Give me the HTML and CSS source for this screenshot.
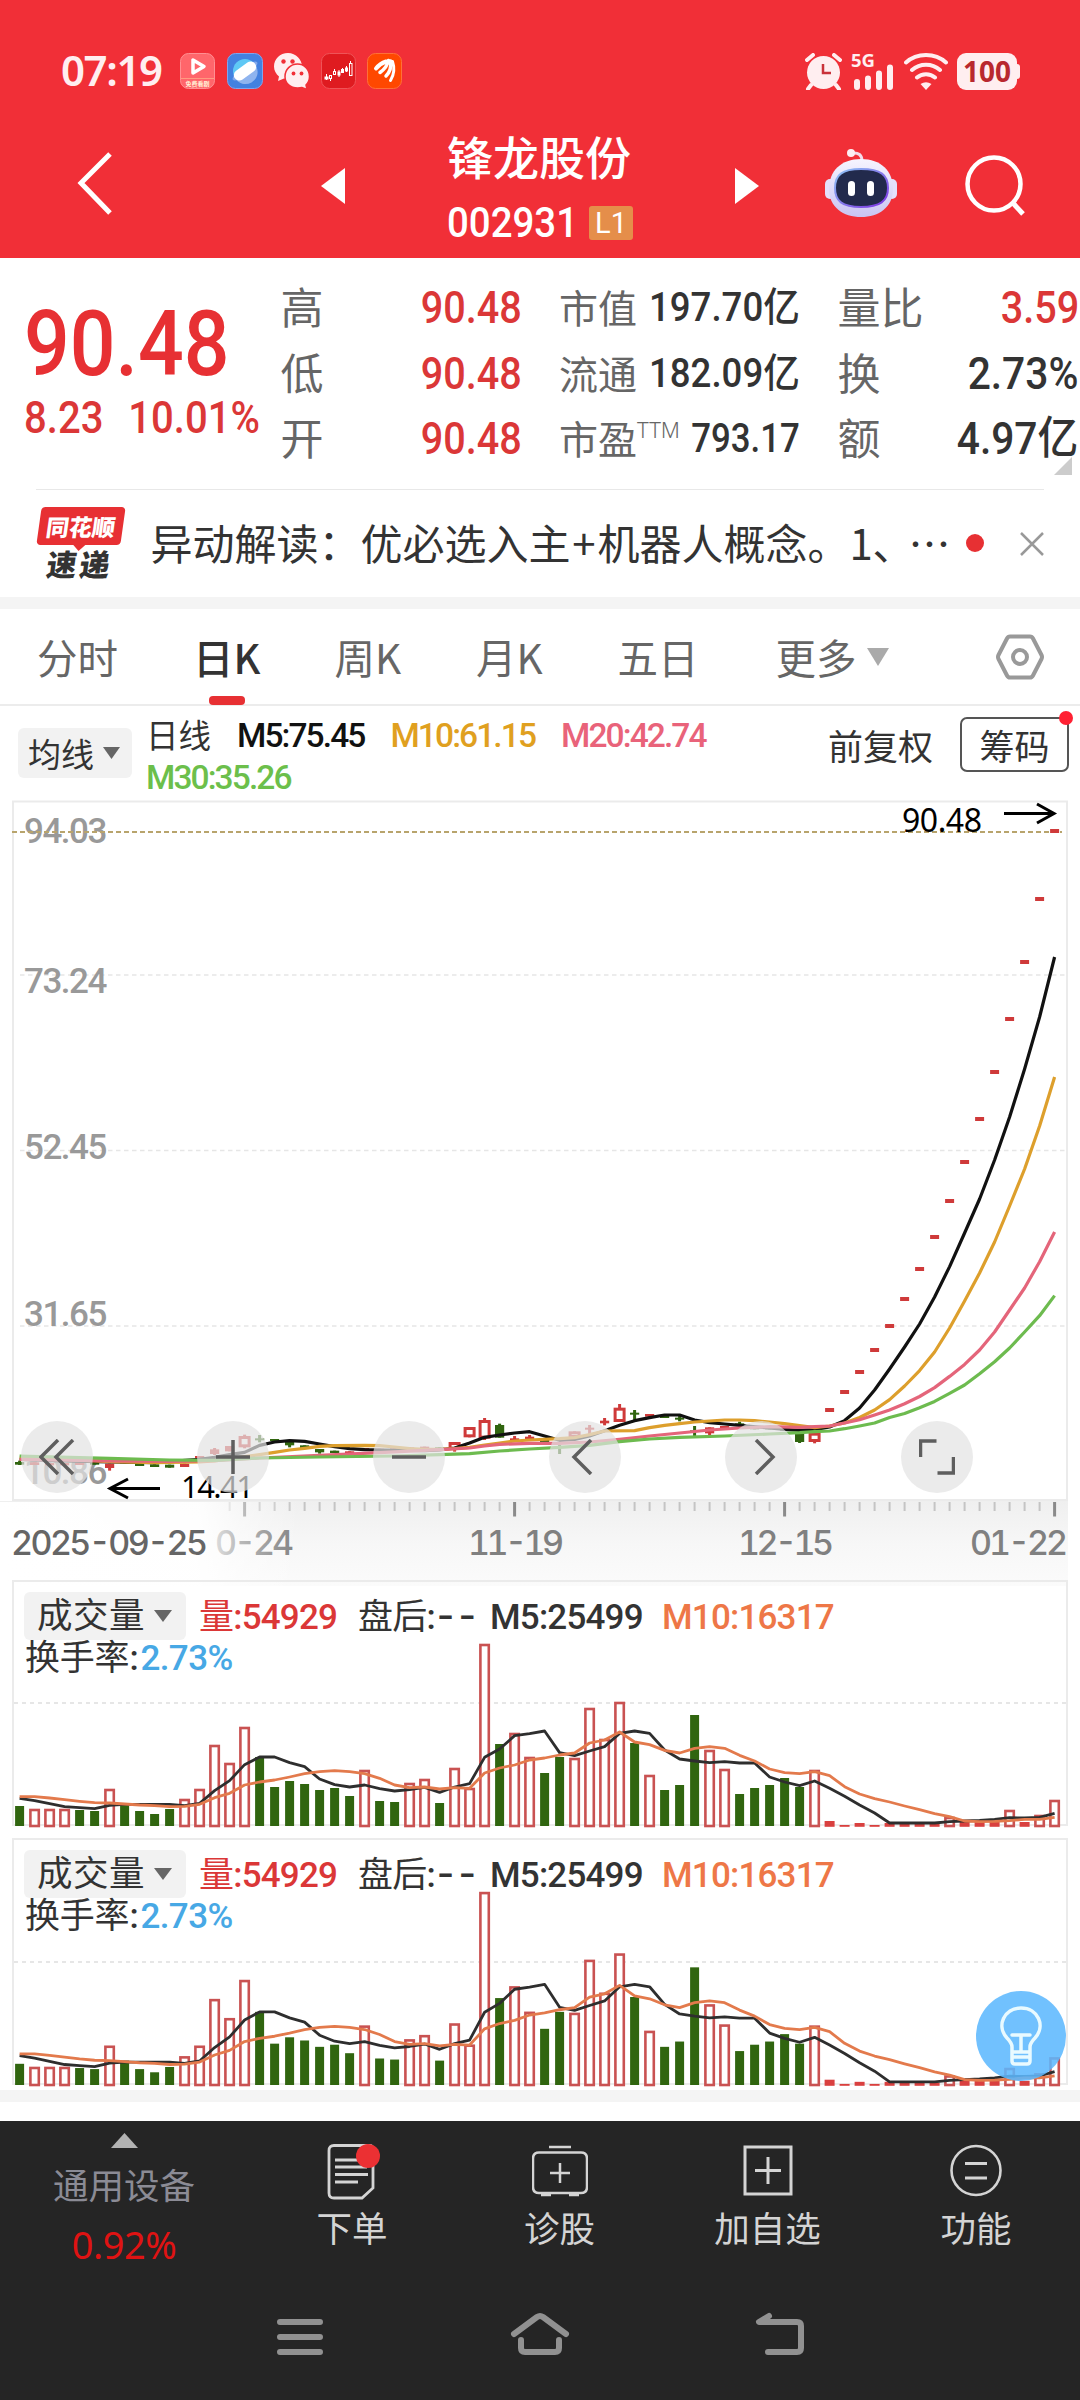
FILE: index.html
```html
<!DOCTYPE html>
<html lang="zh-CN">
<head>
    <meta charset="UTF-8">
    <title>锋龙股份 002931</title>
    <link rel="stylesheet" href="styles.css">
</head>
<body>
    <header class="header">
        <div class="status">
            <span class="time">07:19</span>
            <div class="apps">
                <svg width="35" height="36" viewBox="0 0 35 36">
                    <rect x=".5" y=".5" width="34" height="35" rx="8" fill="#ff666b" stroke="#ff8f92"/>
                    <rect x="1" y="25" width="33" height="1" fill="#ff9a80"/>
                    <path d="M13 7v13l11-6.500z" fill="none" stroke="#fff" stroke-width="3.500" stroke-linejoin="round"/>
                    <text x="17.500" y="33" font-size="6" font-weight="700" fill="#fff3d8" text-anchor="middle">免费看剧</text>
                </svg>
                <svg width="36" height="36" viewBox="0 0 36 36">
                    <rect x=".5" y=".5" width="35" height="35" rx="8" fill="#4381e0" stroke="#7fa5ee"/>
                    <circle cx="18" cy="18" r="12" fill="#5fc8f5"/>
                    <path d="M29 13a12 12 0 0 1-21 12z" fill="#8fb4ef"/>
                    <ellipse cx="18" cy="18" rx="15" ry="4.500" fill="#82a9ec" transform="rotate(-36 18 18)"/>
                    <rect x="5.500" y="12.500" width="25" height="11" rx="5.500" fill="#fff" transform="rotate(-36 18 18)"/>
                </svg>
                <svg width="35" height="36" viewBox="0 0 35 36">
                    <path d="M14 0C6 0 0 6 0 13.500c0 4 2 7.500 5 10L4 28l6-2.500c1.500.5 3 .5 4 .5 8 0 14-5.500 14-12.500S22 0 14 0z" fill="#ffeef0"/>
                    <path d="M23.500 11C16.500 11 11 16.500 11 23.500S16.500 35 23.500 35c1.500 0 3 0 4.500-.5l5 2-1-4.500c2-2 3.500-5 3.500-8.500C35.500 16.500 30.500 11 23.500 11z" fill="#ffeef0" stroke="#f12f37" stroke-width="1.500"/>
                    <g fill="#f12f37"><circle cx="9.500" cy="8.500" r="2.200"/><circle cx="18.500" cy="8.500" r="2.200"/><circle cx="19.500" cy="20.500" r="1.900"/><circle cx="27.500" cy="20.500" r="1.900"/></g>
                </svg>
                <svg width="35" height="36" viewBox="0 0 35 36">
                    <rect x=".5" y=".5" width="34" height="35" rx="8" fill="#df1b20" stroke="#ef5458"/>
                    <g fill="#fff"><path d="M3.500 23.500h4v3h-4zM5 21h1v6H5zM16.500 18.500h3v4h-3zM24 14.500h3v4h-3zM17.500 17h1v7h-1zM25 13h1v6h-1z"/></g>
                    <g fill="none" stroke="#fff"><rect x="8.500" y="22.500" width="2" height="3"/><rect x="12.500" y="18.500" width="2" height="3"/><rect x="20.500" y="16.500" width="2" height="3"/><rect x="28.500" y="10.500" width="2.500" height="12"/><path d="M9.500 25v3M13.500 16v3M21.500 15v5M29.500 8v2"/></g>
                </svg>
                <svg width="35" height="36" viewBox="0 0 35 36">
                    <rect x=".5" y=".5" width="34" height="35" rx="8" fill="#ff4800" stroke="#ff7038"/>
                    <g fill="none" stroke="#fff" stroke-linecap="round"><path d="M9 15.500q4-5 10-7" stroke-width="4"/><path d="M13 19.500q7-5 8.500-12" stroke-width="3.500"/><path d="M19 23q6-6 4.500-15" stroke-width="3.500"/><path d="M23.500 27.500q5.500-9 2-19" stroke-width="3"/></g>
                </svg>
            </div>
            <div class="signals">
                <svg width="37" height="37" viewBox="0 0 37 37">
                    <circle cx="18.500" cy="19.500" r="16.500" fill="#ffeef0"/>
                    <path d="M2 7l6-5M29 2l6 5M6 32l-3 4M31 32l3 4" stroke="#ffeef0" stroke-width="4" stroke-linecap="round"/>
                    <path d="M18 11v9h8" fill="none" stroke="#c9323a" stroke-width="2.500"/>
                </svg>
                <svg class="cell" width="44" height="37" viewBox="0 0 44 37">
                    <text x="0" y="14" font-size="18" font-weight="700" fill="#ffeef0" textLength="24" lengthAdjust="spacingAndGlyphs">5G</text>
                    <path d="M6 29v5M17 25.500V34M28 20.500V34M39 14.500V34" stroke="#ffeef0" stroke-width="6" stroke-linecap="round"/>
                </svg>
                <svg width="44" height="37" viewBox="0 0 44 37">
                    <g fill="none" stroke="#ffeef0" stroke-width="4" stroke-linecap="round"><path d="M2 9.500c11-10 29-10 40 0M8 17c8-7 20-7 28 0M13 24.500c5-4.500 13-4.500 18 0"/></g>
                    <path d="M16.500 31q5.500-3.500 11 0L22 37z" fill="#ffeef0"/>
                </svg>
                <span class="battery">100</span>
            </div>
        </div>
        <div class="titlebar">
            <svg class="back" width="38" height="66" viewBox="0 0 38 66"><path d="M34 3L5 32l29 30" fill="none" stroke="#fff" stroke-width="5"/></svg>
            <svg class="prev" width="24" height="36"><path d="M24 0v36L0 18z" fill="#fff"/></svg>
            <div class="stock">
                <h1>锋龙股份</h1>
                <p><span class="code">002931</span><span class="badge">L1</span></p>
            </div>
            <svg class="next" width="24" height="36"><path d="M0 0v36l24-18z" fill="#fff"/></svg>
            <svg class="robot" width="72" height="68" viewBox="0 0 72 68">
                <defs>
                    <linearGradient id="shell" x1="0" y1="0" x2="0" y2="1"><stop offset="0" stop-color="#f6f4ff"/><stop offset="1" stop-color="#c9c4f2"/></linearGradient>
                    <linearGradient id="rim" x1="0" y1="0" x2="1" y2="1"><stop offset="0" stop-color="#8fc7f5"/><stop offset="1" stop-color="#7a2fe0"/></linearGradient>
                </defs>
                <path d="M27 4q10-1 10 8" fill="none" stroke="#f3dcea" stroke-width="3"/>
                <circle cx="26" cy="4" r="4" fill="#fdeef3"/>
                <rect x="0" y="30" width="10" height="20" rx="5" fill="#e4e0fb"/>
                <rect x="62" y="30" width="10" height="20" rx="5" fill="#e4e0fb"/>
                <path d="M36 10c20 0 32 12 32 30S54 68 36 68 4 58 4 40s12-30 32-30z" fill="url(#shell)"/>
                <path d="M36 20c20 0 27 6 27 19s-8 19-27 19-26-6-26-19 7-19 26-19z" fill="#222a4c" stroke="url(#rim)" stroke-width="2"/>
                <rect x="23" y="32" width="7" height="15" rx="3.500" fill="#fff"/>
                <rect x="42" y="32" width="7" height="15" rx="3.500" fill="#fff"/>
            </svg>
            <svg class="search" width="62" height="62" viewBox="0 0 62 62"><circle cx="29" cy="30" r="26.500" fill="none" stroke="#fff" stroke-width="4.500"/><path d="M47 48l11 12" stroke="#fff" stroke-width="5"/></svg>
        </div>
    </header>

    <section class="quote">
        <div class="price">
            <strong>90.48</strong>
            <div class="change"><span>8.23</span><span>10.01%</span></div>
        </div>
        <dl class="col-a">
            <div><dt>高</dt><dd class="up">90.48</dd></div>
            <div><dt>低</dt><dd class="up">90.48</dd></div>
            <div><dt>开</dt><dd class="up">90.48</dd></div>
        </dl>
        <dl class="col-b">
            <div><dt>市值</dt><dd>197.70<i>亿</i></dd></div>
            <div><dt>流通</dt><dd>182.09<i>亿</i></dd></div>
            <div><dt>市盈<sup>TTM</sup></dt><dd class="pe">793.17</dd></div>
        </dl>
        <dl class="col-c">
            <div><dt>量比</dt><dd class="up">3.59</dd></div>
            <div><dt>换</dt><dd>2.73%</dd></div>
            <div><dt>额</dt><dd>4.97<i>亿</i></dd></div>
        </dl>
        <span class="corner"></span>
    </section>

    <section class="news">
        <div class="logo">
            <span class="logo-top">同花顺</span>
            <span class="logo-bottom">速递</span>
        </div>
        <p>异动解读：优必选入主<b>+</b>机器人概念。<em>1</em>、</p>
        <span class="more">…</span>
        <span class="dot"></span>
        <svg width="26" height="26" viewBox="0 0 26 26"><path d="M2 2l22 22M24 2L2 24" stroke="#999" stroke-width="2.500"/></svg>
    </section>

    <nav class="tabs">
        <a>分时</a>
        <a class="active">日K</a>
        <a>周K</a>
        <a>月K</a>
        <a>五日</a>
        <a class="drop">更多<svg width="22" height="18"><path d="M0 0h22L11 18z" fill="#aaa"/></svg></a>
        <svg class="gear" width="48" height="46" viewBox="0 0 48 46"><path d="M14 2.500h20q2 0 3 2L45.500 21q1 2 0 4L37 41.500q-1 2-3 2H14q-2 0-3-2L2.500 25q-1-2 0-4L11 4.500q1-2 3-2z" fill="none" stroke="#999" stroke-width="4"/><circle cx="24" cy="23" r="7" fill="none" stroke="#999" stroke-width="4"/></svg>
    </nav>

    <section class="ma">
        <button class="pick">均线<svg width="17" height="12"><path d="M0 0h17L8.500 12z" fill="#666"/></svg></button>
        <div class="ma-values">
            <span class="kind">日线</span>
            <span class="m5">M5:75.45</span>
            <span class="m10">M10:61.15</span>
            <span class="m20">M20:42.74</span>
            <span class="m30">M30:35.26</span>
        </div>
        <span class="adjust">前复权</span>
        <button class="chips">筹码<span class="dot"></span></button>
    </section>

    <section class="chart">
        <svg id="kline" width="1080" height="701" viewBox="0 800 1080 701"></svg>
        <div class="tools">
            <button><svg width="36" height="36"><path d="M19 1L2 18l17 17M34 1L17 18l17 17"/></svg></button>
            <button><svg width="36" height="36"><path d="M1 18h34M18 1v34"/></svg></button>
            <button><svg width="36" height="36"><path d="M1 18h34"/></svg></button>
            <button><svg width="36" height="36"><path d="M24 1L7 18l17 17"/></svg></button>
            <button><svg width="36" height="36"><path d="M13 1l17 17-17 17"/></svg></button>
            <button><svg width="36" height="36"><path d="M1.500 18V2h16M34.500 18v16h-16"/></svg></button>
        </div>
    </section>

    <svg class="axis" id="axis" width="1080" height="85" viewBox="0 1501 1080 85"></svg>

    <section class="volume first">
        <div class="vol-head">
            <button class="pick">成交量<svg width="18" height="12"><path d="M0 0h18L9 12z" fill="#666"/></svg></button>
            <span class="amount"><i>量</i>:54929</span>
            <span class="after"><i>盘后</i>:<u>--</u></span>
            <span class="vm5">M5:25499</span>
            <span class="vm10">M10:16317</span>
        </div>
        <div class="turnover"><i>换手率</i>:<span>2.73%</span></div>
        <svg class="bars" id="vol1" width="1080" height="186" viewBox="0 -184 1080 186"></svg>
    </section>

    <section class="volume second">
        <div class="vol-head">
            <button class="pick">成交量<svg width="18" height="12"><path d="M0 0h18L9 12z" fill="#666"/></svg></button>
            <span class="amount"><i>量</i>:54929</span>
            <span class="after"><i>盘后</i>:<u>--</u></span>
            <span class="vm5">M5:25499</span>
            <span class="vm10">M10:16317</span>
        </div>
        <div class="turnover"><i>换手率</i>:<span>2.73%</span></div>
        <svg class="bars" id="vol2" width="1080" height="197" viewBox="0 -195 1080 197"></svg>
        <div class="bulb">
            <svg width="42" height="60" viewBox="0 0 42 60"><path d="M12 46V41c0-4-2-6-5-9C-4 20 4 2 21 2s25 18 14 30c-3 3-5 5-5 9v5zM12 46v9q0 3 3 3h12q3 0 3-3v-9M12 29h18M21 29v17M12 51h18" fill="none" stroke="#e9faff" stroke-width="3.500" stroke-linecap="round" stroke-linejoin="round"/></svg>
        </div>
    </section>

    <footer>
        <div class="menu">
            <div class="sector">
                <svg width="27" height="15"><path d="M13.500 0L27 15H0z" fill="#b3b3b3"/></svg>
                <span>通用设备</span>
                <b>0.92%</b>
            </div>
            <div class="item">
                <svg width="56" height="58" viewBox="0 0 56 58"><path d="M10 2.500h35q4 0 4 4V45L38 55H10q-5 0-5-5V7.500q0-5 5-5zM11 17h30M11 24h32M11 31.500h33M11 39h23" fill="none" stroke="#d4d4d4" stroke-width="2.800"/><circle cx="44" cy="13" r="12" fill="#eb3033"/></svg>
                <span>下单</span>
            </div>
            <div class="item">
                <svg width="56" height="58" viewBox="0 0 56 58"><path d="M17 4h22M7 9.500h42q6 0 6 6V44q0 6-6 6H7q-6 0-6-6V15.500q0-6 6-6zM28 20v20M18 30h20M9 52h10M37 52h10" fill="none" stroke="#d4d4d4" stroke-width="2.500"/></svg>
                <span>诊股</span>
            </div>
            <div class="item">
                <svg width="56" height="58" viewBox="0 0 56 58"><path d="M5 4h46v47H5zM28 14v27M15 27.500h26" fill="none" stroke="#d4d4d4" stroke-width="3"/></svg>
                <span>加自选</span>
            </div>
            <div class="item">
                <svg width="56" height="58" viewBox="0 0 56 58"><circle cx="28" cy="27.500" r="24.500" fill="none" stroke="#d4d4d4" stroke-width="2.600"/><path d="M17 20.500h22M17 35h22" stroke="#d4d4d4" stroke-width="3"/></svg>
                <span>功能</span>
            </div>
        </div>
        <div class="sysnav">
            <svg width="60" height="50" viewBox="0 0 60 50"><path d="M10 10h40M10 25h40M10 40h40"/></svg>
            <svg width="60" height="50" viewBox="0 0 60 50"><path d="M4 22L27 5q3-2 6 0l23 17M11 28v8q0 4 4 4h30q4 0 4-4v-8"/></svg>
            <svg width="60" height="50" viewBox="0 0 60 50"><path d="M19 4L9 10h38q4 0 4 4v22q0 4-4 4H18"/></svg>
        </div>
    </footer>

    <script src="chart.js"></script>
</body>
</html>
```
FILE: styles.css
```css
* {
    box-sizing: border-box;
}
body {
    margin: 0;
    width: 1080px;
    background: #fff;
    color: #333;
    font-family: "Noto Sans CJK SC", sans-serif;
}
h1, p, dl, dd {
    margin: 0;
}
svg {
    display: block;
    flex: none;
}
button {
    border: none;
    padding: 0;
    font-family: inherit;
    color: #333;
}
i, em {
    font-style: normal;
}

/* header */
.header {
    height: 258px;
    background: #f12f37;
    color: #fff;
}
.status {
    display: flex;
    height: 123px;
    padding: 53px 60px 0 61px;
}
.time {
    width: 119px;
    font: 600 42px/34px "Noto Sans", sans-serif;
    letter-spacing: -1.400px;
    color: #ffeef0;
}
.apps {
    display: flex;
    gap: 11.500px;
    flex: 1;
}
.signals {
    display: flex;
    gap: 9px;
}
.cell {
    overflow: visible;
    font-family: "Noto Sans", sans-serif;
}
.battery {
    position: relative;
    width: 60px;
    height: 37px;
    margin-right: 3px;
    border-radius: 9px;
    background: #ffeef0;
    color: #b9282e;
    font: 700 28px/37px "Noto Sans", sans-serif;
    text-align: center;
}
.battery::after {
    content: "";
    position: absolute;
    right: -3px;
    top: 11px;
    width: 4px;
    height: 15px;
    border-radius: 0 3px 3px 0;
    background: #ffeef0;
}
.titlebar {
    display: flex;
    height: 135px;
    padding-left: 76px;
}
.back {
    margin-top: 28px;
}
.prev {
    margin: 45px 0 0 207px;
}
.stock {
    width: 188px;
    margin-left: 102px;
}
.stock h1 {
    font-size: 46px;
    font-weight: 500;
    line-height: 64px;
    white-space: nowrap;
}
.stock p {
    display: flex;
    height: 60px;
    margin-top: 6px;
    align-items: center;
}
.code {
    width: 142px;
    font: 500 42px/60px Roboto, sans-serif;
    transform: scaleX(.915);
    transform-origin: left;
}
.badge {
    width: 44px;
    height: 34px;
    border-radius: 3px;
    background: #e58e4a;
    font: 400 29px/35px Roboto, sans-serif;
    text-align: center;
}
.next {
    margin: 45px 0 0 100px;
}
.robot {
    margin: 26px 0 0 66px;
}
.search {
    margin: 31px 0 0 68px;
}

/* quote */
.quote {
    position: relative;
    display: grid;
    grid-template-columns: 218px 240px 240px 241px;
    column-gap: 38.500px;
    height: 232px;
    padding: 17px 0 0 24px;
}
.quote::after {
    content: "";
    position: absolute;
    left: 36px;
    right: 36px;
    bottom: 0;
    height: 1px;
    background: #e8e8e8;
}
.price {
    font-family: Roboto, sans-serif;
    font-weight: 500;
    color: #e73033;
}
.price strong {
    display: block;
    width: 232px;
    font-size: 91px;
    font-weight: 500;
    line-height: 138px;
    transform: scaleX(.885);
    transform-origin: left;
}
.change {
    display: flex;
    width: 268px;
    gap: 28px;
    margin-top: -19px;
    font-size: 45px;
    line-height: 48px;
    color: #db3737;
    white-space: nowrap;
    transform: scaleX(.89);
    transform-origin: left;
}
.quote dl div {
    display: flex;
    justify-content: space-between;
    height: 65.500px;
    line-height: 65.500px;
}
.quote dt {
    font-size: 43px;
    margin-top: -2px;
    color: #666;
}
.quote dd {
    font-family: Roboto, "Noto Sans CJK SC", sans-serif;
    font-weight: 500;
    font-size: 45px;
    transform: scaleX(.905);
    transform-origin: right;
    white-space: nowrap;
}
.quote .col-b dt {
    margin-top: -1px;
    font-size: 39px;
    white-space: nowrap;
}
.quote .col-b dd {
    font-size: 40px;
    margin-left: -30px;
    margin-right: -1px;
    transform: scaleX(.915);
}
.quote .col-b .pe {
    transform: scaleX(.87);
}
.quote sup {
    font: 300 22px/20px "Noto Sans", sans-serif;
    vertical-align: 16px;
}
.quote .up {
    color: #db3737;
    margin-right: -1px;
    transform: scaleX(.88);
}
.corner {
    position: absolute;
    right: 8px;
    bottom: 15px;
    border-left: 18px solid transparent;
    border-bottom: 18px solid #ccc;
}

/* news */
.news {
    display: flex;
    align-items: center;
    height: 119px;
    padding-left: 36px;
    border-bottom: 12px solid #f4f4f4;
}
.news > * {
    flex: none;
}
.logo {
    width: 90px;
    height: 74px;
    margin-right: 24.500px;
    text-align: center;
    font-weight: 900;
}
.logo span {
    display: block;
}
.logo-top {
    position: relative;
    width: 84px;
    height: 38px;
    margin-left: 3px;
    border-radius: 4px;
    background: #e73033;
    color: #fff;
    font-size: 23px;
    line-height: 38px;
    transform: skewX(-8deg);
}
.logo-top::after {
    content: "";
    position: absolute;
    left: 37px;
    top: 38px;
    border: 6px solid transparent;
    border-top-color: #e73033;
}
.logo-bottom {
    margin-left: -2px;
    font-size: 30px;
    line-height: 37px;
    letter-spacing: 3px;
    transform: skewX(-8deg);
}
.news p {
    width: 758px;
    font-size: 42px;
    line-height: 60px;
    margin-top: -4px;
    white-space: nowrap;
}
.news b {
    display: inline-block;
    width: 27px;
    font-weight: 400;
    text-align: center;
}
.news em {
    display: inline-block;
    width: 23px;
}
.more {
    width: 44px;
    margin-top: -4px;
    font-size: 42px;
    line-height: 60px;
}
.news .dot {
    width: 18px;
    height: 18px;
    margin: -2px 35px 0 13px;
    border-radius: 9px;
    background: #e73033;
}

/* period tabs */
.tabs {
    display: flex;
    height: 97px;
    padding-left: 37px;
    border-bottom: 2px solid #ececec;
    font-size: 40.500px;
    line-height: 96px;
    color: #666;
}
.tabs a {
    position: relative;
    width: 141.500px;
    white-space: nowrap;
}
.tabs a:nth-child(1) {
    width: 156px;
}
.tabs a:nth-child(5) {
    width: 158px;
}
.tabs .active {
    color: #333;
    font-weight: 500;
}
.active::after {
    content: "";
    position: absolute;
    left: 16px;
    top: 87px;
    width: 36px;
    height: 9px;
    border-radius: 4px;
    background: #e73033;
}
.tabs .drop {
    display: flex;
    width: 220.500px;
    gap: 10px;
}
.drop svg {
    margin-top: 39px;
}
.gear {
    margin-top: 25px;
}

/* moving averages legend */
.ma {
    display: flex;
    height: 94px;
    padding-left: 18px;
}
.pick {
    display: flex;
    align-items: center;
    justify-content: center;
    gap: 9px;
    border-radius: 6px;
    background: #f2f2f2;
}
.ma .pick {
    width: 114px;
    height: 50px;
    margin: 22px 14px 0 0;
    padding-right: 2px;
    font-size: 33px;
    line-height: 48px;
}
.ma-values {
    display: flex;
    flex-wrap: wrap;
    column-gap: 26px;
    width: 600px;
    height: 84px;
    margin: 9px 0 0;
    font: 500 33.500px/41px Roboto, sans-serif;
    letter-spacing: -1.900px;
    color: #111;
}
.kind {
    font-family: "Noto Sans CJK SC", sans-serif;
    font-size: 32.500px;
    font-weight: 400;
    letter-spacing: 0;
    color: #333;
    margin-top: -2px;
    height: 41px;
}
.m10 { color: #e0a01f; }
.m20 { color: #e9637a; }
.m30 { color: #6cbf4b; }
.adjust {
    width: 132px;
    margin-left: 82px;
    font-size: 35px;
    line-height: 78px;
}
.chips {
    position: relative;
    width: 109px;
    height: 55px;
    margin-top: 11px;
    border: 2px solid #555;
    border-radius: 7px;
    background: #fff;
    font-size: 35px;
    line-height: 51px;
}
.chips .dot {
    position: absolute;
    right: -6px;
    top: -8px;
    width: 14px;
    height: 14px;
    border-radius: 7px;
    background: #ff2133;
}

/* candles */
.chart {
    position: relative;
    height: 701px;
}
.chart text {
    font-family: "Noto Sans", sans-serif;
}
.chart .level {
    font-family: Roboto, sans-serif;
    font-weight: 500;
    font-size: 35px;
    letter-spacing: -1.500px;
    fill: #999;
}
.tools {
    position: absolute;
    left: 21px;
    top: 621px;
    display: flex;
    gap: 104px;
}
.tools button {
    display: grid;
    place-items: center;
    width: 72px;
    height: 72px;
    border-radius: 36px;
    background: rgba(226, 226, 226, .7);
}
.tools path {
    fill: none;
    stroke: #5e5e5e;
    stroke-width: 3.500;
}
.axis text {
    font-family: Inter, sans-serif;
    font-feature-settings: "tnum";
    font-weight: 500;
    font-size: 34px;
    fill: #808080;
}

/* volume */
.volume {
    position: relative;
    font-size: 35px;
}
.volume::before {
    content: "";
    position: absolute;
    left: 12px;
    right: 12px;
    top: 0;
    bottom: 0;
    border: 2px solid #ebebeb;
}
.first {
    height: 246px;
    margin-top: -6px;
    background: linear-gradient(transparent 6px, #fff 6px);
}
.second {
    height: 247px;
    margin-top: 12px;
}
.vol-head {
    position: relative;
    display: flex;
    padding: 12px 0 0 24px;
    height: 60px;
    font: 500 35px/51px Roboto, sans-serif;
    white-space: nowrap;
}
.vol-head i, .turnover i {
    font-family: "Noto Sans CJK SC", sans-serif;
    font-weight: 400;
    line-height: 40px;
}
.volume .pick {
    width: 162px;
    height: 48px;
    margin-right: 13px;
    padding-right: 2px;
    font-size: 35.500px;
    line-height: 46px;
}
.vol-head span {
    letter-spacing: -.8px;
}
.amount {
    width: 159px;
    color: #db3737;
}
.after {
    width: 132px;
}
.after u {
    margin-left: 2px;
    font-family: Inter, sans-serif;
    font-size: 38px;
    line-height: 40px;
    letter-spacing: 4px;
    text-decoration: none;
}
.vm5 {
    width: 172px;
}
.vm10 {
    color: #ee7747;
}
.turnover {
    position: relative;
    height: 0;
    margin: -5px 0 0 25px;
    font: 500 35px/44px Roboto, sans-serif;
    letter-spacing: -.2px;
}
.turnover span {
    margin-left: 2px;
    color: #47a8e5;
    letter-spacing: -.6px;
}
.bars {
    position: absolute;
    left: 0;
    bottom: -2px;
}
.bulb {
    position: absolute;
    left: 976px;
    top: 153px;
    width: 90px;
    height: 90px;
    border-radius: 45px;
    display: grid;
    place-items: center;
    background: rgba(92, 184, 254, .87);
}

/* footer */
footer {
    height: 310px;
    margin-top: 5px;
    border-top: 12px solid #f4f4f4;
}
.menu {
    display: grid;
    grid-template-columns: 248px 208px 207px 209px 208px;
    height: 166px;
    margin-top: 19px;
    background: #252525;
    color: #d4d4d4;
    font-size: 35.500px;
}
.sector, .item {
    display: flex;
    flex-direction: column;
    align-items: center;
}
.sector {
    padding: 12px 0 0;
    color: #8b8b95;
}
.sector span {
    line-height: 72px;
}
.sector b {
    font: 400 38px/48px "Noto Sans", sans-serif;
    letter-spacing: -.5px;
    color: #df1313;
}
.item {
    padding-top: 22px;
}
.item span {
    line-height: 52px;
}
.sysnav {
    display: flex;
    justify-content: center;
    gap: 180px;
    height: 113px;
    padding-top: 25px;
    background: #252525;
}
.sysnav path {
    fill: none;
    stroke: #919191;
    stroke-width: 6;
    stroke-linecap: round;
    stroke-linejoin: round;
}
```
FILE: chart.js
```js
const STEP = 15;
const x = i => 19.6 + i * STEP;

// [color, top, bottom, high, low, hollow], in thirds of a pixel below 1360
const candles = [
    ['g',306,314,302,315],['r',307,315],['r',309,316],['r',309,316],['r',308,315],['g',307,314],['r',311,324,311,332],
    ['g',305,310],['g',310,318],['g',313,321],['g',314,323],['r',311,321],['r',288,298],['r',268,282,264,285],
    ['r',258,274],['r',228,262,224,265,1],['g',235,241,225,247],['g',237,243],['g',246,256,246,262],['g',256,264],
    ['g',267,277,267,281],['g',272,279],['r',274,281],['r',264,272],['r',266,273],['r',265,271],['r',262,268],
    ['r',260,266],['g',262,268],['r',246,270,246,275,1],['r',201,232,201,232,1],['r',180,236,174,240,1],
    ['g',195,233,191,233],['r',235,240,228,245],['r',230,238,225,238],['g',240,246],['g',260,264,255,282],
    ['r',214,234,214,234,1],['r',203,209,195,222],['r',182,190,174,196],['r',143,186,132,186,1],['g',158,164,150,180],
    ['r',162,170],['g',165,174],['g',173,179,168,184],['g',211,216,198,228],['r',202,220,202,225],['r',198,210],
    ['g',190,196,185,200],['g',200,208],['g',200,208],['g',205,212],['g',220,246,220,249],['r',218,246,218,250,1]
];
// limit-up days: y only
const limits = [1410,1392,1372,1350,1326,1299,1269,1237,1201,1162,1119,1072,1019,962,899,831];

const ma5 = {0:298,3:303,6:306,9:308,12:298,13:292,14:284,15:277,16:256,17:246,18:242,19:244,20:252,21:260,22:266,23:269,24:270,26:271,27:272,28:270,29:264,30:249,31:232,32:225,33:219,34:215,35:228,36:241,37:238,38:228,39:212,40:196,41:182,42:173,43:165,44:165,45:180,46:188,47:192,48:196,50:204,51:208,52:211,53:209};
const ma10 = {0:294,3:298,6:305,9:308,12:306,13:303,14:297,15:290,16:284,17:277,18:270,19:265,20:259,21:257,23:256,24:257,25:261,26:266,27:268,28:268,29:266,30:262,31:255,32:249,33:243,34:240,36:236,37:233,38:224,39:213,41:212,42:203,43:196,44:191,45:186,46:183,47:180,48:180,49:182,50:186,51:191,52:197,53:203};
const ma20 = {0:298,6:303,10:304,13:302,16:294,20:286,24:278,28:269,30:264,31:258,32:253,34:250,36:250,38:246,40:238,42:228,44:219,46:210,48:204,50:200,52:202,53:200};
const ma30 = {0:288,6:295,10:300,13:301,16:294,20:291,25:288,28:284,30:281,32:273,34:267,36:262,38:256,40:245,42:237,44:232,47:228,50:222,52:218,53:215};
// day 54 to 69
const tail = {
    ma5: [1427,1420.6,1408,1390,1369,1347,1324,1297,1266.6,1233,1199,1160,1117,1069,1017,957],
    ma10: [1426,1423,1417.5,1410,1399.6,1386,1370.600,1352,1328,1301,1273,1242,1206,1169,1126,1077],
    ma20: [1426,1423,1419.7,1415,1410,1403.700,1396.500,1387.600,1376.400,1364.400,1350,1332,1310,1288,1261.700,1232],
    ma30: [1431,1428.700,1426,1423,1417.500,1413.500,1407.700,1401.400,1393.400,1385,1373.800,1361.700,1348,1332,1315.700,1295.600]
};

const RED = '#cf3a3a', GREEN = '#30650f';

function line(points, color, width) {
    return `<polyline points="${points.map(p => p.join()).join(' ')}" fill="none" stroke="${color}" stroke-width="${width}" stroke-linejoin="round"/>`;
}
function average(head, rest, color) {
    const pts = Object.keys(head).map(i => [x(+i), 1360 + head[i] / 3]);
    rest.forEach((y, i) => pts.push([x(54 + i), y]));
    return line(pts, color, 3.2);
}

let k = '<path d="M13 1500V801.500H1067V1500z" fill="none" stroke="#ebebeb" stroke-width="2"/>';
[975, 1150.5, 1326].forEach(y => k += `<path d="M20 ${y}H1066" stroke="#e6e6e6" stroke-width="1.5" stroke-dasharray="4.5 3.5"/>`);
[['94.03',843],['73.24',993],['52.45',1159],['31.65',1326],['10.86',1484]].forEach(l => k += `<text class="level" x="24" y="${l[1]}">${l[0]}</text>`);
k += '<path d="M12 832H1062" stroke="#b8a46c" stroke-width="2" stroke-dasharray="5 3"/>';
candles.forEach((c, i) => {
    const color = c[0] === 'g' ? GREEN : RED;
    const [top, bottom, high, low] = [c[1], c[2], c[3] || c[1], c[4] || c[2]].map(v => 1360 + v / 3);
    k += `<path d="M${x(i)} ${high}V${low}" stroke="${color}" stroke-width="3"/>`;
    if (c[5]) k += `<rect x="${x(i) - 4.5}" y="${top + 1.5}" width="9" height="${bottom - top - 3}" fill="#fff" stroke="${color}" stroke-width="3"/>`;
    else k += `<rect x="${x(i) - 4.6}" y="${top}" width="9.2" height="${bottom - top}" fill="${color}"/>`;
});
limits.forEach((y, i) => k += `<rect x="${x(54 + i) - 4.5}" y="${y - 2}" width="9" height="4" fill="${RED}"/>`);
k += average(ma5, tail.ma5, '#111') + average(ma10, tail.ma10, '#dd9f2c') + average(ma20, tail.ma20, '#e4657a') + average(ma30, tail.ma30, '#6dbb4f');
k += '<text x="902" y="832" font-size="32" textLength="80">90.48</text><text x="181" y="1498" font-size="31" textLength="73">14.41</text>';
k += '<path d="M1004 813.500H1054M1037 804l17 9.500-17 9.500M160 1488.500H110M128 1479l-18 9.500 18 9.500" fill="none" stroke="#000" stroke-width="3"/>';
document.getElementById('kline').innerHTML = k;

// date axis, faded out on the left
let a = `<defs>
    <linearGradient id="down" x1="0" y1="0" x2="0" y2="1"><stop offset="0" stop-color="#efefef"/><stop offset=".5" stop-color="#f7f7f7"/><stop offset="1" stop-color="#fbfbfb"/></linearGradient>
    <linearGradient id="fade"><stop offset="0" stop-color="#fff"/><stop offset=".66" stop-color="#fff" stop-opacity=".92"/><stop offset=".8" stop-color="#fff" stop-opacity=".45"/><stop offset="1" stop-color="#fff" stop-opacity="0"/></linearGradient>
</defs><rect x="0" y="1501" width="1068" height="85" fill="url(#down)"/>`;
for (let i = 14; i < 70; i++) {
    const big = (i - 15) % 18 === 0;
    a += `<path d="M${x(i)} 1502V${big ? 1516.500 : 1511}" stroke="${big ? '#8a8a8a' : '#c4c4c4'}" stroke-width="${big ? 3 : 2}"/>`;
}
a += '<text x="215" y="1555" textLength="79">0-24</text><text x="468" y="1555" textLength="96">11-19</text><text x="738" y="1555" textLength="96">12-15</text><text x="970" y="1555" textLength="98">01-22</text>';
a += '<rect x="0" y="1502" width="300" height="84" fill="url(#fade)"/><text x="11" y="1555" textLength="197" style="fill:#666">2025-09-25</text>';
document.getElementById('axis').innerHTML = a;

const volumes = [20,17,17,17,16,15,37,23,15,12,17,27,37,81,63,99,69,39,45,42,36,38,30,56,25,24,43,47,23,58,38,182,82,93,69,53,69,68,118,87,124,83,51,36,41,111,76,57,32,38,41,48,39,56,5,1,3,1,3,2,2,2,9,5,4,5,16,4,11,26];
const downs = [0,4,5,7,8,9,10,16,17,18,19,20,21,22,24,25,28,32,35,36,41,43,44,45,48,49,50,51,52];
const vma5 = [685,692,701,710,713,716,706,703,703,703,703,707,700,662,632,584,561,561,578,590,627,644,651,645,656,663,659,652,667,651,641,562,537,497,491,483,548,557,543,530,490,483,490,540,567,573,578,575,579,579,621,636,647,633,655,679,705,729,759,759,759,759,755,753,751,748,743,744,742,730];
const vma10 = [680,680,684,689,694,698,699,702,705,707,710,709,703,683,670,645,636,630,621,611,605,602,605,611,625,645,653,651,657,653,655,609,594,585,570,564,555,549,519,510,486,516,524,541,549,535,530,535,556,573,597,608,611,605,617,650,672,686,696,708,719,731,740,753,755,754,752,748,748,742];

function drawVolume(id, scale) {
    let s = '<path d="M14 -123H1066" stroke="#e6e6e6" stroke-width="2" stroke-dasharray="4 4"/>';
    volumes.forEach((v, i) => {
        const h = v * scale;
        if (downs.includes(i)) s += `<rect x="${x(i) - 4.5}" y="${-h}" width="9" height="${h}" fill="${GREEN}"/>`;
        else if (h < 7) s += `<rect x="${x(i) - 5}" y="${-h}" width="10" height="${h + .8}" fill="#d9403f"/>`;
        else s += `<rect x="${x(i) - 4.2}" y="${1 - h}" width="8.4" height="${h - 1}" fill="#fff" stroke="#c95252" stroke-width="2.6"/>`;
    });
    const pts = a => a.map((y, i) => [x(i), (y - 768) / 3 * scale]);
    s += line(pts(vma5), '#2e2e2e', 2.800) + line(pts(vma10), '#e37a4c', 2.800);
    document.getElementById(id).innerHTML = s;
}
drawVolume('vol1', 1);
drawVolume('vol2', 1.060);
```
